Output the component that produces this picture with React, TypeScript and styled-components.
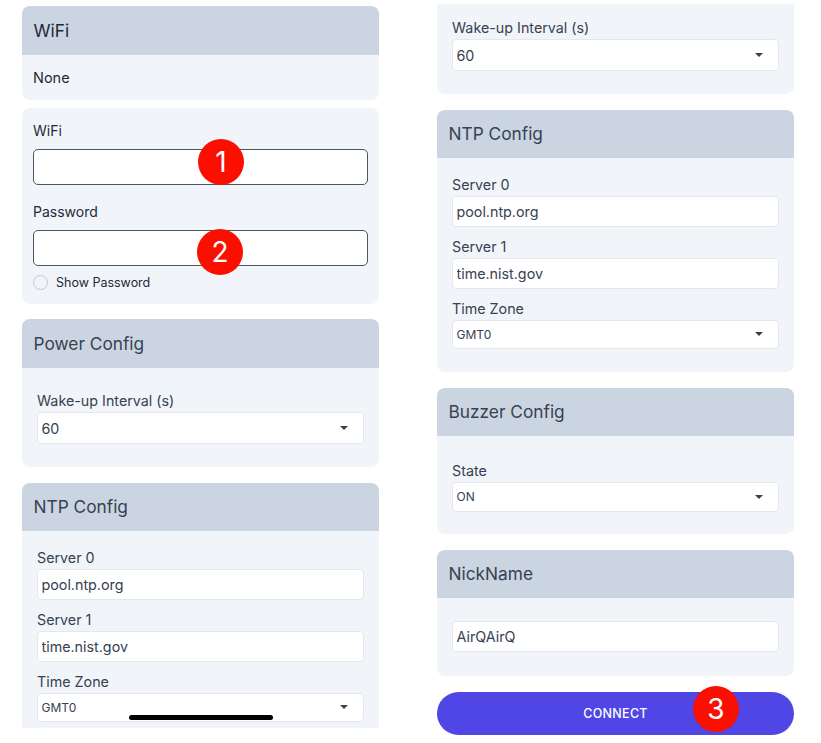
import { createGlobalStyle, styled } from "styled-components";

const GlobalStyle = createGlobalStyle`
  html, body {
    margin: 0;
    padding: 0;
    background: #fff;
    font-family: Inter, "Liberation Sans", sans-serif;
    color: #374151;
  }
`;

const Page = styled.div`
  position: relative;
  display: flex;
  gap: 58px;
  width: 821px;
  height: 743px;
  padding-left: 22px;
  box-sizing: border-box;
  overflow: hidden;
`;

const Column = styled.div<{ $top: number; $height: number }>`
  display: flex;
  flex-direction: column;
  gap: 15.5px;
  width: 357px;
  height: ${(p) => p.$height}px;
  padding-top: ${(p) => p.$top}px;
  box-sizing: border-box;
  overflow: hidden;
  flex-shrink: 0;
`;

const Card = styled.section<{ $cut?: boolean; $tight?: boolean }>`
  background: #f1f5f9;
  border-radius: ${(p) => (p.$cut ? "0 0 8px 8px" : "8px")};
  margin-top: ${(p) => (p.$tight ? "-7.5px" : "0")};
  flex-shrink: 0;
  overflow: hidden;
`;

const CardHeader = styled.h2<{ $dark?: boolean }>`
  margin: 0;
  height: 48.5px;
  padding: 0 11.5px;
  display: flex;
  align-items: center;
  background: #cbd5e1;
  font-size: 17.3px;
  font-weight: 400;
  color: ${(p) => (p.$dark ? "#1f2937" : "#374151")};
`;

const CardBody = styled.div<{ $top: number; $bottom: number }>`
  padding: ${(p) => p.$top}px 15px ${(p) => p.$bottom}px;
`;

const Plain = styled.div`
  height: 45.5px;
  padding: 0 11px;
  display: flex;
  align-items: center;
  font-size: 14.5px;
  color: #1f2937;
`;

const WifiForm = styled.div`
  padding: 12.5px 11px 13.5px;
`;

const WifiLabel = styled.label`
  display: block;
  height: 20px;
  line-height: 20px;
  font-size: 14px;
  color: #1f2937;
  margin-bottom: 8.5px;
`;

const WifiInput = styled.input`
  display: block;
  width: 100%;
  height: 36px;
  box-sizing: border-box;
  background: #fff;
  border: 1px solid #4b5563;
  border-radius: 5px;
  margin-bottom: 16.5px;
  &:last-of-type {
    margin-bottom: 9px;
  }
`;

const ShowRow = styled.div`
  display: flex;
  align-items: center;
  gap: 8px;
  font-size: 12.5px;
  color: #1f2937;
`;

const Radio = styled.span`
  width: 15px;
  height: 15px;
  box-sizing: border-box;
  border: 1px solid #c4c8ce;
  border-radius: 50%;
`;

const Field = styled.div`
  & + & {
    margin-top: 9.7px;
  }
`;

const FieldLabel = styled.label`
  display: block;
  height: 20px;
  line-height: 20px;
  font-size: 14.3px;
  color: #374151;
  margin-bottom: 1px;
`;

const TextInput = styled.input`
  display: block;
  width: 100%;
  height: 31px;
  box-sizing: border-box;
  padding: 0 3.5px;
  background: #fff;
  border: 1px solid #e5e7eb;
  border-radius: 4px;
  font-family: inherit;
  font-size: 14.3px;
  color: #374151;
  outline: none;
`;

const Select = styled.div<{ $small?: boolean }>`
  display: flex;
  align-items: center;
  justify-content: space-between;
  height: ${(p) => (p.$small ? 29.5 : 32)}px;
  box-sizing: border-box;
  padding: 0 15px 0 3.5px;
  background: #fff;
  border: 1px solid #e5e7eb;
  border-radius: 4px;
  font-size: ${(p) => (p.$small ? 12 : 14.3)}px;
  color: #374151;
`;

const Caret = styled.span`
  width: 0;
  height: 0;
  border-left: 4px solid transparent;
  border-right: 4px solid transparent;
  border-top: 4px solid #374151;
`;

const ConnectButton = styled.button`
  flex-shrink: 0;
  height: 43px;
  border: none;
  border-radius: 22px;
  background: #4f46e5;
  color: #fff;
  font-family: inherit;
  font-size: 12.5px;
  font-weight: 500;
  letter-spacing: 0.3px;
`;

const Badge = styled.span<{ $x: number; $y: number }>`
  position: absolute;
  left: ${(p) => p.$x - 23}px;
  top: ${(p) => p.$y - 23}px;
  width: 46px;
  height: 46px;
  display: flex;
  align-items: center;
  justify-content: center;
  border-radius: 50%;
  background: #fb0f00;
  color: #fff;
  font-size: 28px;
  line-height: 1;
`;

const HomeBar = styled.div`
  position: absolute;
  left: 129px;
  top: 715px;
  width: 144px;
  height: 5px;
  border-radius: 3px;
  background: #000;
`;

const noop = () => {};

const TextField = ({ label, value }: { label: string; value: string }) => (
  <Field>
    <FieldLabel>{label}</FieldLabel>
    <TextInput value={value} onChange={noop} />
  </Field>
);

const SelectField = ({
  label,
  value,
  small,
}: {
  label: string;
  value: string;
  small?: boolean;
}) => (
  <Field>
    <FieldLabel>{label}</FieldLabel>
    <Select $small={small}>
      {value}
      <Caret />
    </Select>
  </Field>
);

const NtpFields = () => (
  <>
    <TextField label="Server 0" value="pool.ntp.org" />
    <TextField label="Server 1" value="time.nist.gov" />
    <SelectField label="Time Zone" value="GMT0" small />
  </>
);

const App = () => {
  return (
    <>
      <GlobalStyle />
      <Page>
        <Column $top={6} $height={728}>
          <Card>
            <CardHeader $dark>WiFi</CardHeader>
            <Plain>None</Plain>
          </Card>
          <Card $tight>
            <WifiForm>
              <WifiLabel>WiFi</WifiLabel>
              <WifiInput onChange={noop} value="" />
              <WifiLabel>Password</WifiLabel>
              <WifiInput onChange={noop} value="" />
              <ShowRow>
                <Radio />
                Show Password
              </ShowRow>
            </WifiForm>
          </Card>
          <Card>
            <CardHeader>Power Config</CardHeader>
            <CardBody $top={23.5} $bottom={23}>
              <SelectField label="Wake-up Interval (s)" value="60" />
            </CardBody>
          </Card>
          <Card>
            <CardHeader>NTP Config</CardHeader>
            <CardBody $top={17.3} $bottom={23}>
              <NtpFields />
            </CardBody>
          </Card>
        </Column>
        <Column $top={4} $height={743}>
          <Card $cut>
            <CardBody $top={14} $bottom={23}>
              <SelectField label="Wake-up Interval (s)" value="60" />
            </CardBody>
          </Card>
          <Card>
            <CardHeader>NTP Config</CardHeader>
            <CardBody $top={17.3} $bottom={23}>
              <NtpFields />
            </CardBody>
          </Card>
          <Card>
            <CardHeader>Buzzer Config</CardHeader>
            <CardBody $top={25} $bottom={22.5}>
              <SelectField label="State" value="ON" small />
            </CardBody>
          </Card>
          <Card>
            <CardHeader>NickName</CardHeader>
            <CardBody $top={23} $bottom={24}>
              <TextInput value="AirQAirQ" onChange={noop} />
            </CardBody>
          </Card>
          <ConnectButton>CONNECT</ConnectButton>
        </Column>
        <Badge $x={221} $y={162}>1</Badge>
        <Badge $x={220} $y={252}>2</Badge>
        <Badge $x={716} $y={709}>3</Badge>
        <HomeBar />
      </Page>
    </>
  );
};

export default App;
